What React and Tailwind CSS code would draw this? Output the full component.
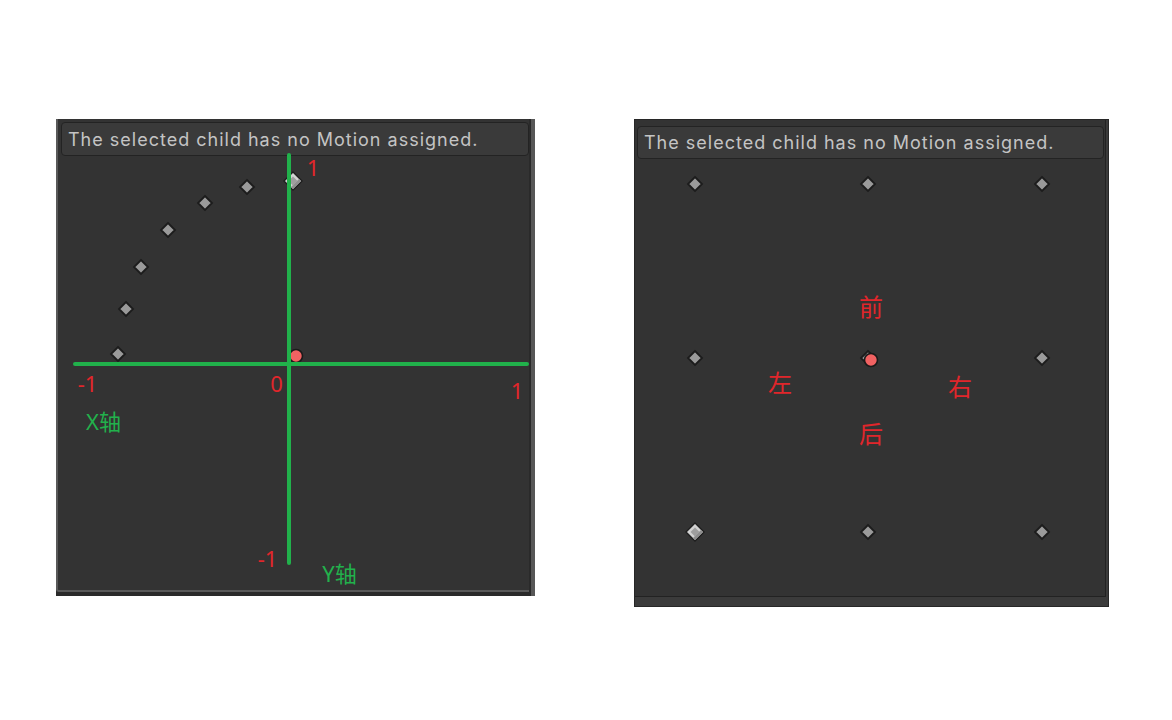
import React from 'react';

const GREEN = '#21b14b';

// left blend tree (2D freeform) sample points, panel-relative
const leftPoints = [
  [62, 235],
  [70, 190],
  [85, 148],
  [112, 111],
  [149, 84],
  [191, 68],
];

const leftLabels = [
  { t: '-1', x: 31.5, y: 264, c: 'text-[#e1262b]' },
  { t: '0', x: 220.5, y: 264, c: 'text-[#e1262b]' },
  { t: '1', x: 461, y: 271, c: 'text-[#e1262b]' },
  { t: '1', x: 257, y: 48, c: 'text-[#e1262b]' },
  { t: '-1', x: 211.5, y: 439, c: 'text-[#e1262b]' },
  { t: 'X轴', x: 47.5, y: 302, c: 'text-[#22b14c]' },
  { t: 'Y轴', x: 283.5, y: 454, c: 'text-[#22b14c]' },
];

const cols = [60, 233, 407];
const rows = [64, 238, 412];

const rightLabels = [
  { t: '前', x: 236, y: 187 },
  { t: '左', x: 145, y: 263 },
  { t: '右', x: 325, y: 267 },
  { t: '后', x: 236, y: 314 },
];

function Diamond({ x, y }) {
  return (
    <polygon
      points={`${x},${y - 7} ${x + 7},${y} ${x},${y + 7} ${x - 7},${y}`}
      fill="#9a9a9a"
      stroke="#1c1c1c"
      strokeWidth="1.8"
    />
  );
}

function BigDiamond({ x, y }) {
  return (
    <g>
      <polygon
        points={`${x},${y - 9} ${x + 9},${y} ${x},${y + 9} ${x - 9},${y}`}
        fill="#d2d2d2"
        stroke="#1e1e1e"
        strokeWidth="1.4"
      />
      <polygon
        points={`${x + 8},${y} ${x},${y + 8} ${x - 2},${y + 6} ${x + 6},${y - 2}`}
        fill="#8e8e8e"
      />
      <polygon
        points={`${x},${y - 4.5} ${x + 4.5},${y} ${x},${y + 4.5} ${x - 4.5},${y}`}
        fill="#9e9e9e"
      />
    </g>
  );
}

function RedDot({ x, y }) {
  return <circle cx={x} cy={y} r="6.5" fill="#f26262" stroke="#1a1a1a" strokeWidth="1.6" />;
}

function Header() {
  return (
    <div className="h-full flex items-center pl-[6px] rounded-[4px] border border-[#232323] bg-[#3a3a3a] text-[18px] tracking-[1px] text-[#c4c4c4] font-['Inter',sans-serif] whitespace-nowrap">
      The selected child has no Motion assigned.
    </div>
  );
}

function Label({ t, x, y, c, size = 'text-[22px]' }) {
  return (
    <span
      className={`absolute -translate-x-1/2 -translate-y-1/2 leading-none ${size} ${c} font-['Noto_Sans','Noto_Sans_CJK_SC',sans-serif]`}
      style={{ left: x, top: y }}
    >
      {t}
    </span>
  );
}

function FreeformPanel() {
  return (
    <div className="relative w-[479px] h-[477px] shrink-0 bg-[#2a2a2a] border-r-4 border-[#575757]">
      <div className="w-[473px] h-[473px] bg-[#333333] border-l-2 border-b-2 border-[#595959] rounded-bl-[3px] pt-[3px] pl-[3px]">
        <div className="w-[468px] h-[34px]">
          <Header />
        </div>
      </div>

      <svg className="absolute left-0 top-0 pointer-events-none" width="475" height="477">
        {leftPoints.map(([x, y], i) => (
          <Diamond key={i} x={x} y={y} />
        ))}
        <BigDiamond x={237} y={62} />
        <RedDot x={240} y={237} />
        <line x1="19" y1="245" x2="471" y2="245" stroke={GREEN} strokeWidth="4" strokeLinecap="round" />
        <line x1="233" y1="36" x2="233" y2="444" stroke={GREEN} strokeWidth="4" strokeLinecap="round" />
      </svg>

      {leftLabels.map((l, i) => (
        <Label key={i} {...l} />
      ))}
    </div>
  );
}

function GridPanel() {
  return (
    <div className="relative w-[475px] h-[488px] shrink-0 bg-[#3b3b3b] border border-[#272727]">
      <div className="w-[471px] h-[477px] bg-[#333333] border-r border-b border-[#222222] pt-[6px] pl-[2px]">
        <div className="w-[467px] h-[33px]">
          <Header />
        </div>
      </div>

      <svg className="absolute left-0 top-0 pointer-events-none" width="471" height="477">
        {rows.map((y) =>
          cols.map((x) =>
            x === 60 && y === 412 ? <BigDiamond key={`${x}-${y}`} x={x} y={y} /> : <Diamond key={`${x}-${y}`} x={x} y={y} />
          )
        )}
        <RedDot x={236} y={240} />
      </svg>

      {rightLabels.map((l, i) => (
        <Label key={i} {...l} c="text-[#e1262b]" size="text-[24px]" />
      ))}
    </div>
  );
}

export default function App() {
  return (
    <div className="w-full min-h-screen bg-white flex items-start pt-[119px] pl-[56px] gap-[99px]">
      <FreeformPanel />
      <GridPanel />
    </div>
  );
}
